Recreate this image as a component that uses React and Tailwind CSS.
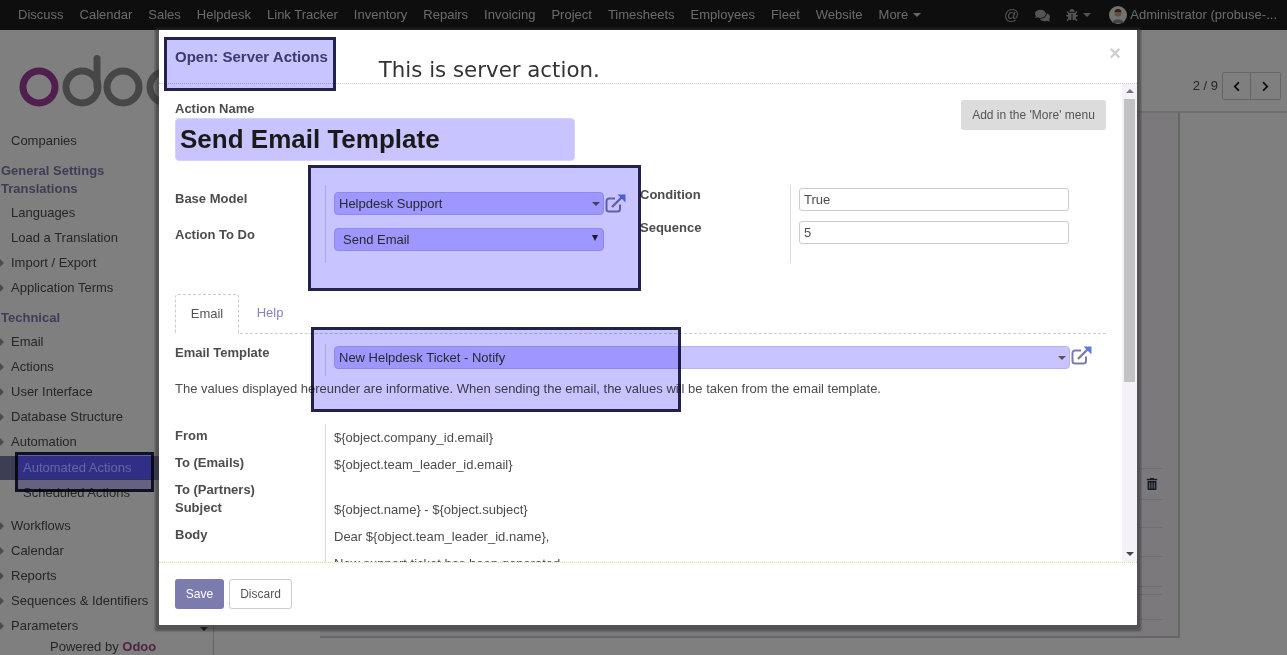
import React from 'react';
import { FaBug, FaComments, FaTrashAlt, FaChevronLeft, FaChevronRight } from 'react-icons/fa';

const MENU = ['Discuss', 'Calendar', 'Sales', 'Helpdesk', 'Link Tracker', 'Inventory', 'Repairs', 'Invoicing', 'Project', 'Timesheets', 'Employees', 'Fleet', 'Website'];

const ExternalIcon = () => (
  <svg width="21" height="19" viewBox="0 0 21 19" fill="none" className="shrink-0">
    <path d="M15 10.5v4.5a2.5 2.5 0 0 1-2.5 2.5H4a2.5 2.5 0 0 1-2.5-2.5V7A2.5 2.5 0 0 1 4 4.500h6" stroke="#7c7bad" strokeWidth="2" />
    <path d="M7 13 L17 3" stroke="#7c7bad" strokeWidth="2.400" />
    <path d="M12.500 0.500H20.500V8.500Z" fill="#5b7fd6" />
  </svg>
);

const Caret = ({ className }) => (
  <span className={`inline-block w-0 h-0 border-l-[4px] border-r-[4px] border-t-[4px] border-l-transparent border-r-transparent ${className}`} />
);

const SideItem = ({ children, arrow, sub }) => (
  <div className={`h-[25px] leading-[25px] relative whitespace-nowrap ${sub ? 'pl-[23px]' : 'pl-[11px]'}`}>
    {arrow && <span className="absolute left-0 top-[9px] w-0 h-0 border-y-[4px] border-y-transparent border-l-[4px] border-l-[#999]" />}
    {children}
  </div>
);

const Sidebar = () => (
  <div className="w-[214px] shrink-0 border-r border-[#ccc] relative h-full overflow-hidden text-[13px] text-[#4c4c4c]">
    <svg width="160" height="70" viewBox="0 0 160 70" className="mt-[20px] ml-0 block">
      <circle cx="39" cy="37" r="16" fill="none" stroke="#a23f9a" strokeWidth="7" />
      <circle cx="82" cy="37" r="16" fill="none" stroke="#8f8f8f" strokeWidth="7" />
      <path d="M97 37V8.500" stroke="#8f8f8f" strokeWidth="7" strokeLinecap="round" />
      <circle cx="123" cy="37" r="16" fill="none" stroke="#8f8f8f" strokeWidth="7" />
      <circle cx="166" cy="37" r="16" fill="none" stroke="#8f8f8f" strokeWidth="7" />
    </svg>
    <div className="mt-[8px]">
      <SideItem>Companies</SideItem>
      <div className="mt-[9px] pl-[1px] font-bold text-[#7c7bad] leading-[18px]">General Settings</div>
      <div className="pl-[1px] font-bold text-[#7c7bad] leading-[18px] mb-[2px]">Translations</div>
      <SideItem>Languages</SideItem>
      <SideItem>Load a Translation</SideItem>
      <SideItem arrow>Import / Export</SideItem>
      <SideItem arrow>Application Terms</SideItem>
      <div className="mt-[9px] pl-[1px] font-bold text-[#7c7bad] leading-[18px] mb-[2px]">Technical</div>
      <SideItem arrow>Email</SideItem>
      <SideItem arrow>Actions</SideItem>
      <SideItem arrow>User Interface</SideItem>
      <SideItem arrow>Database Structure</SideItem>
      <SideItem arrow>Automation</SideItem>
      <div className="mt-[2px] h-[24px] leading-[24px] pl-[23px] bg-[#7c7bad] text-white">Automated Actions</div>
      <SideItem sub>Scheduled Actions</SideItem>
      <div className="h-[8px]" />
      <SideItem arrow>Workflows</SideItem>
      <SideItem arrow>Calendar</SideItem>
      <SideItem arrow>Reports</SideItem>
      <SideItem arrow>Sequences &amp; Identifiers</SideItem>
      <SideItem arrow>Parameters</SideItem>
    </div>
    <Caret className="absolute right-[5px] top-[597px] border-t-black" />
    <div className="absolute left-[50px] top-[608px] leading-[18px]">Powered by <span className="font-bold text-[#a24689]">Odoo</span></div>
  </div>
);

const Navbar = () => (
  <div className="h-[30px] bg-[#1c1c1c] flex items-center pl-[18px] pr-[10px] text-[13px] text-[#d4d4d4] whitespace-nowrap shrink-0">
    <div className="flex gap-[16px]">
      {MENU.map(item => <span key={item}>{item}</span>)}
      <span className="flex items-center gap-[5px]">More <Caret className="border-t-[#d4d4d4]" /></span>
    </div>
    <div className="ml-auto flex items-center text-[#a8a8a8]">
      <span className="text-[15px] mr-[16px]">@</span>
      <FaComments size={15} className="mr-[16px]" />
      <FaBug size={12} className="mr-[5px]" />
      <Caret className="border-t-[#a8a8a8] mr-[18px]" />
      <svg width="18" height="18" viewBox="0 0 18 18" className="mr-[3px]">
        <circle cx="9" cy="9" r="9" fill="#e8e4df" />
        <circle cx="9" cy="7" r="3.500" fill="#c79c7c" />
        <path d="M3 17c1-5 11-5 12 0z" fill="#8a8a8a" />
        <path d="M5.500 6c0-4 7-4 7 0z" fill="#5a4030" />
      </svg>
      <span className="text-[#d4d4d4]">Administrator (probuse-...</span>
    </div>
  </div>
);

const Main = () => (
  <div className="flex-1 relative">
    <div className="h-[83px] border-b-[2px] border-[#ddd] flex justify-end items-start pr-[6px] pt-[42px] text-[13px] text-[#4c4c4c]">
      <span className="mr-[4px] leading-[28px]">2 / 9</span>
      <div className="flex border border-[#ccc] rounded-[2px] h-[28px]">
        <div className="w-[28px] flex items-center justify-center border-r border-[#ccc] text-[#111]"><FaChevronLeft size={11} /></div>
        <div className="w-[29px] flex items-center justify-center text-[#111]"><FaChevronRight size={11} /></div>
      </div>
    </div>
    <div className="h-[525px] ml-[106px] mr-[107px] border-r-[2px] border-b-[2px] border-[#ccc] bg-[#f6f2f8] flex flex-col items-end pr-[16px] pt-[328px]">
      <div className="w-[36px] h-[28px] border-b border-[#ddd]" />
      <div className="w-[36px] h-[31px] border-b border-[#ddd] flex items-center pl-[20px] text-[#333a55]"><FaTrashAlt size={12} /></div>
      <div className="w-[36px] h-[28px] border-b border-[#ddd]" />
      <div className="w-[36px] h-[29px] border-b border-[#ddd]" />
      <div className="w-[36px] h-[30px] border-b border-[#ddd]" />
      <div className="w-[36px] h-[8px] border-b border-[#ddd]" />
      <div className="w-[36px] h-[25px] border-b border-[#ddd]" />
    </div>
  </div>
);

const Label = ({ children, className = '' }) => (
  <div className={`font-bold text-[13px] leading-[18px] text-[#4c4c4c] ${className}`}>{children}</div>
);

const SelectBox = ({ children, width, native }) => (
  <div className={`h-[23px] ${width} bg-[#c8c4ff] border border-[#b6b2ee] rounded-[4px] flex items-center text-[13px] text-[#333] ${native ? 'pl-[8px] pr-[5px]' : 'pl-[4px] pr-[3px]'}`}>
    <span>{children}</span>
    {native
      ? <span className="ml-auto -mt-[3px] w-0 h-0 border-x-[3.500px] border-x-transparent border-t-[6px] border-t-[#222]" />
      : <Caret className="ml-auto border-t-[#555]" />}
  </div>
);

const TextBox = ({ children }) => (
  <div className="h-[23px] w-[270px] border border-[#ccc] rounded-[3px] pl-[4px] leading-[21px] text-[13px] text-[#4c4c4c]">{children}</div>
);

const FieldRow = ({ label, value, height }) => (
  <div className={`flex ${height}`}>
    <div className="w-[150px] shrink-0"><Label className="pt-[3px]">{label}</Label></div>
    <div className="border-l border-[#ddd] pl-[8px] pt-[5px] leading-[18px] text-[13px] text-[#4c4c4c] flex-1">{value}</div>
  </div>
);

const Modal = () => (
  <div className="absolute left-[159px] top-[30px] w-[978px] h-[595px] bg-white shadow-[0_2px_2px_4px_rgba(50,50,50,0.55)] flex flex-col">
    <div className="h-[54px] shrink-0 border-b border-dotted border-[#ccc] relative flex">
      <div className="pl-[16px] pt-[18px] font-bold text-[15px] leading-[18px] text-[#4c4c6c]">Open: Server Actions</div>
      <div className="ml-[51px] pt-[28px] font-['DejaVu_Sans',sans-serif] text-[21.33px] leading-[24px] text-[#333]">This is server action.</div>
      <div className="ml-auto mr-[16px] pt-[13px] text-[20px] leading-[20px] font-bold text-[#cfcfcf]">×</div>
    </div>

    <div className="flex-1 flex min-h-0">
      <div className="flex-1 overflow-hidden pl-[16px] pr-[16px] pt-[16px] min-w-0">
        <div className="flex justify-between items-start">
          <div>
            <Label>Action Name</Label>
            <div className="h-[43px] w-[400px] bg-[#c8c4ff] border border-[#d6d4f4] rounded-[4px] pl-[4px] font-bold text-[26px] leading-[40px] text-[#1a1a1a]">Send Email Template</div>
          </div>
          <div className="h-[30px] w-[145px] bg-[#dcdcdc] rounded-[3px] text-center text-[12px] leading-[30px] text-[#555]">Add in the 'More' menu</div>
        </div>

        <div className="flex mt-[24px] h-[78px]">
          <div className="w-[150px] shrink-0">
            <Label className="pt-[5px]">Base Model</Label>
            <Label className="pt-[18px]">Action To Do</Label>
          </div>
          <div className="w-[315px] shrink-0 border-l border-[#ddd] pl-[8px] pt-[7px]">
            <div className="flex items-center gap-[1px]">
              <SelectBox width="w-[270px]">Helpdesk Support</SelectBox>
              <ExternalIcon />
            </div>
            <div className="mt-[13px]"><SelectBox width="w-[270px]" native>Send Email</SelectBox></div>
          </div>
          <div className="w-[150px] shrink-0">
            <Label className="pt-[1px]">Condition</Label>
            <Label className="pt-[15px]">Sequence</Label>
          </div>
          <div className="border-l border-[#ddd] pl-[8px] pt-[3px]">
            <TextBox>True</TextBox>
            <div className="mt-[10px]"><TextBox>5</TextBox></div>
          </div>
        </div>

        <div className="flex mt-[31px] h-[40px] border-b border-dashed border-[#ccc] text-[13px]">
          <div className="w-[64px] h-[40px] border border-b-0 border-dashed border-[#ccc] bg-white rounded-t-[3px] text-center leading-[38px] text-[#555]">Email</div>
          <div className="w-[62px] text-center leading-[38px] text-[#8584ba]">Help</div>
        </div>

        <div className="flex mt-[10px] h-[32px]">
          <div className="w-[150px] shrink-0"><Label>Email Template</Label></div>
          <div className="border-l border-[#ddd] pl-[8px] pt-[2px] flex items-start gap-[1px]">
            <SelectBox width="w-[736px]">New Helpdesk Ticket - Notify</SelectBox>
            <ExternalIcon />
          </div>
        </div>
        <div className="mt-[4px] leading-[18px] text-[13px] text-[#4c4c4c]">The values displayed hereunder are informative. When sending the email, the values will be taken from the email template.</div>

        <div className="mt-[26px]">
          <FieldRow label="From" value="${object.company_id.email}" height="h-[27px]" />
          <FieldRow label="To (Emails)" value="${object.team_leader_id.email}" height="h-[27px]" />
          <FieldRow label="To (Partners)" value="" height="h-[18px]" />
          <FieldRow label="Subject" value="${object.name} - ${object.subject}" height="h-[27px]" />
          <FieldRow
            label="Body"
            height="h-[60px]"
            value={<><div>Dear ${'{'}object.team_leader_id.name{'}'},</div><div className="mt-[9px]">New support ticket has been generated.</div></>}
          />
        </div>
      </div>

      <div className="w-[15px] shrink-0 bg-[#f4f2f8] flex flex-col items-center">
        <span className="mt-[5px] w-0 h-0 border-x-[4px] border-x-transparent border-b-[4px] border-b-[#777]" />
        <div className="mt-[6px] w-[11px] h-[283px] bg-[#c2c2c2]" />
        <Caret className="mt-auto mb-[6px] border-t-[#444]" />
      </div>
    </div>

    <div className="h-[63px] shrink-0 border-t border-dotted border-[#e0dca0] flex items-start pl-[16px] pt-[16px] gap-[5px] text-[12px]">
      <div className="w-[49px] h-[30px] rounded-[3px] bg-[#7c7bad] text-white text-center leading-[30px]">Save</div>
      <div className="w-[63px] h-[30px] rounded-[3px] border border-[#ccc] text-[#555] text-center leading-[28px]">Discard</div>
    </div>
  </div>
);

const Highlight = ({ className }) => (
  <div className={`absolute mix-blend-multiply bg-[#c8c4ff] border-[3px] border-[#22224a] ${className}`} />
);

export default function App() {
  return (
    <div className="relative w-full h-screen overflow-hidden bg-white font-['Liberation_Sans',sans-serif]">
      <Navbar />
      <div className="flex h-[625px]">
        <Sidebar />
        <Main />
      </div>
      <div className="absolute inset-0 bg-black/50" />
      <Modal />
      <Highlight className="left-[164px] top-[37px] w-[172px] h-[54px]" />
      <Highlight className="left-[308px] top-[165px] w-[333px] h-[126px]" />
      <Highlight className="left-[311px] top-[327px] w-[370px] h-[85px]" />
      <Highlight className="left-[15px] top-[452px] w-[139px] h-[40px]" />
      <div className="absolute left-[18px] top-[455px] w-[133px] h-[24px] bg-[#000047] mix-blend-screen" />
    </div>
  );
}
